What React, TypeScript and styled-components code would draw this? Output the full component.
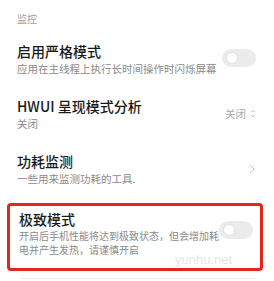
import { FC } from "react";
import styled, { createGlobalStyle } from "styled-components";

const GlobalStyle = createGlobalStyle`
  html, body {
    margin: 0;
    padding: 0;
    background: #fff;
  }
  body {
    font-family: "Noto Sans CJK SC", "Noto Sans", sans-serif;
    -webkit-font-smoothing: antialiased;
  }
`;

interface SettingItem {
  title: string;
  desc: string;
  control: "switch" | "select" | "arrow";
  value?: string;
}

const items: SettingItem[] = [
  { title: "启用严格模式", desc: "应用在主线程上执行长时间操作时闪烁屏幕", control: "switch" },
  { title: "HWUI 呈现模式分析", desc: "关闭", control: "select", value: "关闭" },
  { title: "功耗监测", desc: "一些用来监测功耗的工具.", control: "arrow" },
];

const Control: FC<{ item: SettingItem }> = ({ item }) => {
  if (item.control === "switch") return <Switch />;
  if (item.control === "select")
    return (
      <Select>
        {item.value}
        <svg width="6" height="9" viewBox="0 0 6 9">
          <path d="M1 3.2 L3 1.2 L5 3.2 M1 5.8 L3 7.8 L5 5.8" fill="none" stroke="#b5b5b5" strokeWidth="0.9" />
        </svg>
      </Select>
    );
  return (
    <Arrow>
      <svg width="6" height="10" viewBox="0 0 6 10">
        <path d="M1 1 L5 5 L1 9" fill="none" stroke="#c4c4c4" strokeWidth="1" />
      </svg>
    </Arrow>
  );
};

const App: FC = () => {
  return (
    <Page>
      <GlobalStyle />
      <SectionTitle>监控</SectionTitle>
      {items.map((item) => (
        <Row key={item.title}>
          <Texts>
            <Title>{item.title}</Title>
            <Desc>{item.desc}</Desc>
          </Texts>
          <Control item={item} />
        </Row>
      ))}
      <Highlight>
        <BoxTexts>
          <Title>极致模式</Title>
          <BoxDesc>开启后手机性能将达到极致状态，但会增加耗电并产生发热，请谨慎开启</BoxDesc>
        </BoxTexts>
        <BoxSwitch />
        <Watermark>yunhu.net</Watermark>
      </Highlight>
      <Divider />
    </Page>
  );
};

export default App;

const Page = styled.div`
  width: 274px;
  height: 281px;
  overflow: hidden;
  display: flex;
  flex-direction: column;
`;

const SectionTitle = styled.div`
  padding: 12px 17px 0;
  height: 19px;
  font-size: 10px;
  line-height: 14px;
  color: #a0a0a0;
`;

const Row = styled.div`
  display: flex;
  align-items: center;
  padding: 10px 18px 10px 17px;
`;

const Texts = styled.div`
  flex: 1;
  min-width: 0;
`;

const Title = styled.div`
  font-size: 14px;
  line-height: 20px;
  font-weight: 500;
  color: #1a1a1a;
`;

const Desc = styled.div`
  font-size: 10.5px;
  line-height: 15px;
  color: #8a8a8a;
  white-space: nowrap;
`;

const BoxTexts = styled.div`
  width: 201px;
  margin-right: auto;
  font-size: 10px;
  line-height: 14px;
`;

const BoxDesc = styled.span`
  color: #8a8a8a;
`;

const Switch = styled.div`
  position: relative;
  width: 34px;
  height: 18px;
  border-radius: 9px;
  background: #ebebeb;
  flex-shrink: 0;
  margin-bottom: 2px;
  &::after {
    content: "";
    position: absolute;
    left: 4px;
    top: 3px;
    width: 10px;
    height: 10px;
    border-radius: 50%;
    background: #fff;
    border: 1px solid #e2e2e2;
  }
`;

const BoxSwitch = styled(Switch)`
  margin-bottom: 6px;
`;

const Select = styled.div`
  display: flex;
  align-items: center;
  gap: 4px;
  font-size: 10.5px;
  line-height: 15px;
  color: #a8a8a8;
`;

const Arrow = styled.div`
  display: flex;
  margin: 1px 1px 0 0;
`;

const Highlight = styled.div`
  position: relative;
  display: flex;
  align-items: center;
  margin: 7px 11px 0 7px;
  padding: 3px 7px 11px 9px;
  border: 3px solid #e3261d;
  border-radius: 4px;
`;

const Watermark = styled.div`
  position: absolute;
  left: 165px;
  top: 47px;
  font-family: "Liberation Sans", Arial, sans-serif;
  font-size: 13px;
  line-height: 13px;
  color: #e6e6e6;
`;

const Divider = styled.div`
  margin: 7px 19px 0 20px;
  height: 1px;
  background: #ececec;
`;
